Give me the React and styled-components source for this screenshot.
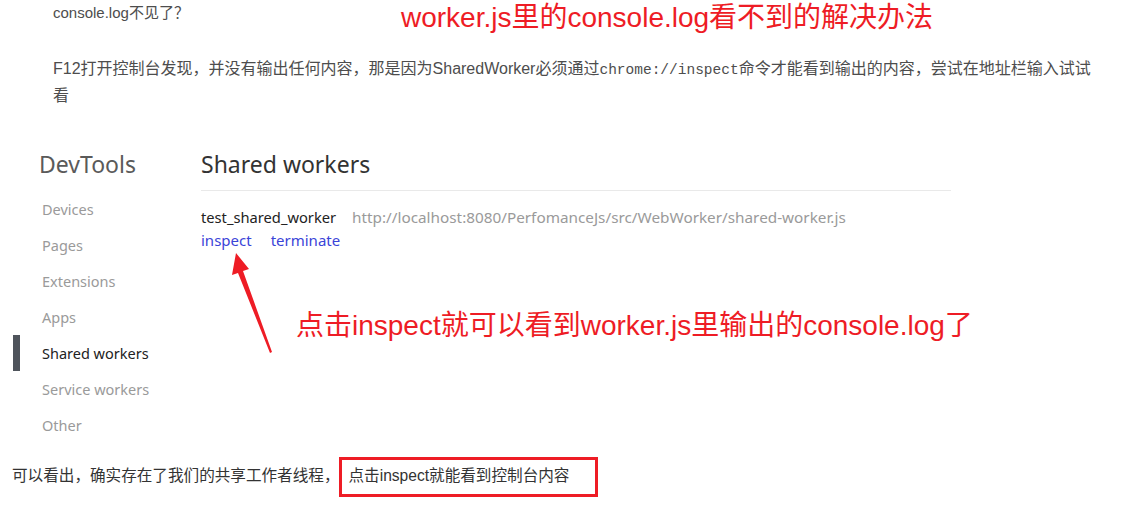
import React from "react";
import styled, { createGlobalStyle } from "styled-components";

const GlobalStyle = createGlobalStyle`
  html, body {
    margin: 0;
    padding: 0;
    background: #ffffff;
  }
  body {
    font-family: "Liberation Sans", "Noto Sans CJK SC", sans-serif;
    color: #4d4d4d;
  }
`;

const CJK = `"Liberation Sans", "Noto Sans CJK SC", sans-serif`;
const UI = `"Noto Sans", "Noto Sans CJK SC", sans-serif`;

const Page = styled.div`
  width: 1124px;
  height: 516px;
  overflow: hidden;
  position: relative;
`;

const TopRow = styled.div`
  display: flex;
  align-items: flex-start;
  height: 40px;
`;

const Question = styled.p`
  margin: 0;
  padding-left: 53px;
  width: 401px;
  box-sizing: border-box;
  font-family: ${CJK};
  font-size: 15px;
  line-height: 26px;
  color: #4d4d4d;
`;

const Note = styled.div`
  font-family: ${CJK};
  font-size: 28px;
  line-height: 36px;
  color: #ee1c25;
  white-space: nowrap;
`;

const Para = styled.p`
  margin: 15px 0 0;
  padding-left: 53px;
  width: 1100px;
  box-sizing: border-box;
  font-family: ${CJK};
  font-size: 16px;
  line-height: 27px;
  color: #4d4d4d;
`;

const Mono = styled.code`
  font-family: "Liberation Mono", monospace;
  font-size: 14.5px;
  line-height: 1;
`;

const Tools = styled.div`
  position: relative;
  display: grid;
  grid-template-columns: 188px 750px;
  margin-top: 36px;
  padding-left: 13px;
`;

const Sidebar = styled.nav`
  display: flex;
  flex-direction: column;
`;

const Brand = styled.h1`
  margin: 0 0 8px 26px;
  font-family: ${UI};
  font-weight: 400;
  font-size: 23px;
  line-height: 38px;
  color: #5a5a5a;
`;

const NavItem = styled.div`
  display: flex;
  align-items: center;
  height: 36px;
  padding-left: 22px;
  border-left: 7px solid ${(p) => (p.$active ? "#4f545c" : "transparent")};
  font-family: ${UI};
  font-size: 14.5px;
  color: ${(p) => (p.$active ? "#222" : "#9a9a9a")};
`;

const Main = styled.section``;

const Heading = styled.h2`
  margin: 0;
  padding-bottom: 7px;
  border-bottom: 1px solid #e9e9e9;
  font-family: ${UI};
  font-weight: 400;
  font-size: 23px;
  line-height: 38px;
  color: #333;
`;

const Worker = styled.div`
  margin-top: 15px;
  font-family: ${UI};
  font-size: 15px;
  line-height: 23px;
`;

const WorkerLine = styled.div`
  display: flex;
  gap: ${(p) => p.$gap || 16}px;
`;

const Name = styled.span`
  color: #222;
  font-size: 14.7px;
`;

const Url = styled.span`
  color: #9a9a9a;
  font-size: 15.3px;
`;

const Link = styled.span`
  color: #3b44d8;
`;

const Callout = styled.div`
  position: absolute;
  left: 296px;
  top: 163px;
  font-family: ${CJK};
  font-size: 28px;
  line-height: 36px;
  color: #ee1c25;
  white-space: nowrap;
`;

const Arrow = styled.svg`
  position: absolute;
  left: 218px;
  top: 106px;
`;

const Bottom = styled.p`
  margin: 15px 0 0;
  padding-left: 12px;
  font-family: ${CJK};
  font-size: 15.6px;
  line-height: 36px;
  color: #333;
`;

const Boxed = styled.span`
  display: inline-block;
  box-sizing: border-box;
  width: 259px;
  height: 40px;
  padding-left: 6px;
  border: 3px solid #ee1c25;
  line-height: 32px;
  vertical-align: top;
  margin-top: -1px;
`;

const navItems = [
  "Devices",
  "Pages",
  "Extensions",
  "Apps",
  "Shared workers",
  "Service workers",
  "Other",
];

export default function App() {
  return (
    <>
      <GlobalStyle />
      <Page>
        <TopRow>
          <Question>console.log不见了？</Question>
          <Note>worker.js里的console.log看不到的解决办法</Note>
        </TopRow>
        <Para>
          F12打开控制台发现，并没有输出任何内容，那是因为SharedWorker必须通过
          <Mono>chrome://inspect</Mono>
          命令才能看到输出的内容，尝试在地址栏输入试试
          <br />
          看
        </Para>
        <Tools>
          <Sidebar>
            <Brand>DevTools</Brand>
            {navItems.map((item) => (
              <NavItem key={item} $active={item === "Shared workers"}>
                {item}
              </NavItem>
            ))}
          </Sidebar>
          <Main>
            <Heading>Shared workers</Heading>
            <Worker>
              <WorkerLine>
                <Name>test_shared_worker</Name>
                <Url>http://localhost:8080/PerfomanceJs/src/WebWorker/shared-worker.js</Url>
              </WorkerLine>
              <WorkerLine $gap={19}>
                <Link>inspect</Link>
                <Link>terminate</Link>
              </WorkerLine>
            </Worker>
          </Main>
          <Arrow width="60" height="110" viewBox="0 0 60 110">
            <polygon points="18,2 14,24 20,22 52,102 54,101 25,20 31,18" fill="#ee1c25" />
          </Arrow>
          <Callout>点击inspect就可以看到worker.js里输出的console.log了</Callout>
        </Tools>
        <Bottom>
          可以看出，确实存在了我们的共享工作者线程，<Boxed>点击inspect就能看到控制台内容</Boxed>
        </Bottom>
      </Page>
    </>
  );
}
